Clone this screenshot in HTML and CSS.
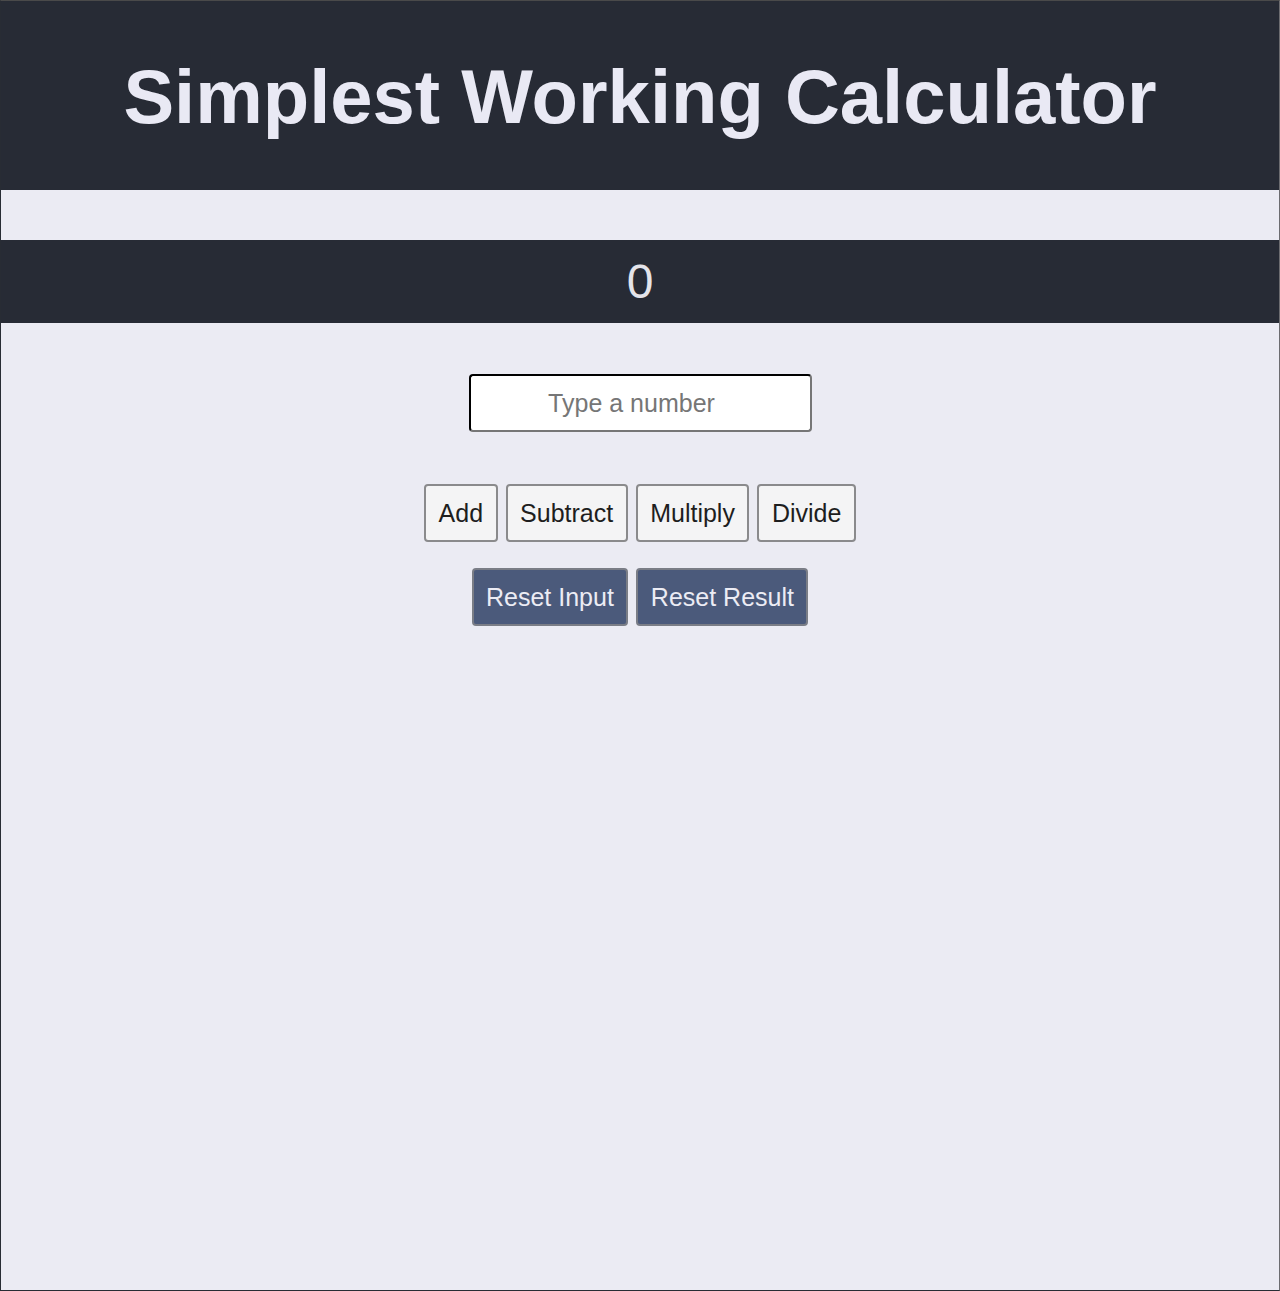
FILE: index.html
```html
<!DOCTYPE html>
<html lang="en">
<head>
<meta charset="utf-8">
<title>Simplest Working Calculator</title>
<link rel="stylesheet" href="styles.css">
</head>
<body>
<div class="frame">
  <header class="header">
    <h1 class="title">Simplest Working Calculator</h1>
  </header>
  <main class="main">
    <div class="result">0</div>
    <input class="number-input" type="number" placeholder="Type a number">
    <div class="ops">
      <button class="btn">Add</button>
      <button class="btn">Subtract</button>
      <button class="btn">Multiply</button>
      <button class="btn">Divide</button>
    </div>
    <div class="ops resets">
      <button class="btn btn-reset">Reset Input</button>
      <button class="btn btn-reset">Reset Result</button>
    </div>
  </main>
</div>
</body>
</html>
```

FILE: styles.css
```css
html, body {
  margin: 0;
  padding: 0;
  height: 100%;
}
body {
  background: #282c36;
  font-family: "Liberation Sans", Arial, sans-serif;
}
.frame {
  box-sizing: border-box;
  height: 1291px;
  border: 1px solid #282c34;
  border-top-color: #4a4a4a;
  border-right-color: #6c6c70;
  background: #ebebf3;
  display: flex;
  flex-direction: column;
}
.header {
  background: #272b35;
  height: 189px;
  display: flex;
  align-items: center;
  justify-content: center;
}
.title {
  margin: 0;
  color: #e9e9f4;
  font-size: 76px;
  font-weight: bold;
  position: relative;
  top: 1px;
}
.main {
  display: flex;
  flex-direction: column;
  align-items: center;
  padding-top: 50px;
}
.result {
  align-self: stretch;
  background: #272b35;
  color: #e4e4ea;
  font-size: 48px;
  text-align: center;
  height: 83px;
  line-height: 83px;
}
.number-input {
  box-sizing: border-box;
  margin-top: 51px;
  width: 343px;
  height: 58px;
  border: 2px inset #767676;
  border-top-color: #222;
  border-left-color: #222;
  border-radius: 4px;
  background: #fff;
  font-family: inherit;
  font-size: 25px;
  text-align: center;
  padding: 0 2px 0 0;
  color: #222;
}
.number-input::placeholder {
  color: #767676;
}
.ops {
  display: flex;
  gap: 8px;
  margin-top: 52px;
}
.resets {
  margin-top: 26px;
}
.btn {
  box-sizing: border-box;
  height: 58px;
  padding: 0 12.5px;
  border: 2px solid #8a8a8c;
  border-radius: 4px;
  background: #f4f4f5;
  color: #1e1e1e;
  font-family: inherit;
  font-size: 25px;
}
.btn-reset {
  background: #4b5a7b;
  color: #ececf4;
  border-color: #7a7d86;
}
```
